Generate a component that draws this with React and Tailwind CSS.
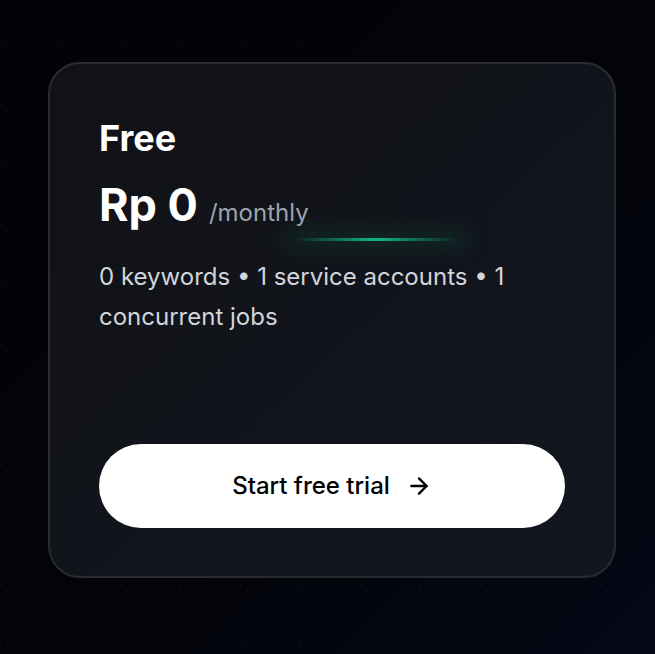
import React from "react";

export default function App() {
  return (
    <div
      className="min-h-screen w-full bg-[#030409] pl-[48px] pr-[39px] pt-[62px] pb-[77px] font-['Inter',sans-serif]"
      style={{
        backgroundImage:
          "radial-gradient(circle at 0px 45px, rgba(255,255,255,0.07) 1px, transparent 1.5px), linear-gradient(135deg, #020308 0%, #030409 55%, #050816 100%)",
        backgroundSize: "60px 60px, 100% 100%",
      }}
    >
      {/* Plan card */}
      <div className="relative flex flex-col rounded-[32px] border-2 border-[#2a2b31] bg-gradient-to-br from-[#111216] to-[#121620] px-[49px] pt-[50px] pb-[48px]">
        <h2 className="text-[36px] font-bold leading-[48px] text-white">
          Free
        </h2>

        <div className="mt-[19px] flex items-baseline gap-[11px]">
          <span className="text-[45px] font-bold leading-[48px] text-white">
            Rp 0
          </span>
          <span className="text-[24px] text-[#9ca3af]">/monthly</span>
        </div>

        {/* green glow line */}
        <div className="pointer-events-none absolute left-[240px] top-[174px] h-[3px] w-[172px] bg-gradient-to-r from-transparent via-[#10b981] to-transparent shadow-[0_0_22px_6px_rgba(16,185,129,0.16)]" />

        <p className="mt-[26px] text-[24px] leading-[40px] text-[#d1d5db]">
          0 keywords • 1 service accounts • 1 concurrent jobs
        </p>

        <button className="mt-[107px] flex h-[84px] w-full items-center justify-center gap-[16px] rounded-full bg-white text-[24px] font-medium text-black">
          Start free trial
          <svg
            width="26"
            height="26"
            viewBox="0 0 24 24"
            fill="none"
            stroke="currentColor"
            strokeWidth="2.2"
            strokeLinecap="round"
            strokeLinejoin="round"
          >
            <path d="M5 12h14" />
            <path d="m12 5 7 7-7 7" />
          </svg>
        </button>
      </div>
    </div>
  );
}
